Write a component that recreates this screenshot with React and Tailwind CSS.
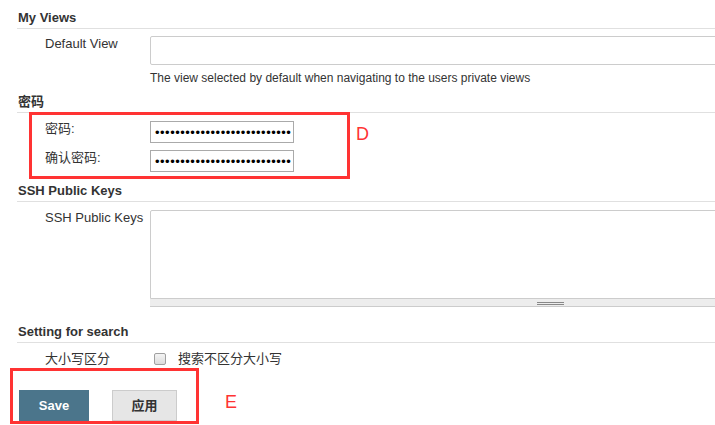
import React from "react";

function SectionHeader({ children, className = "" }) {
    return (
        <div className={`border-b border-[#e0e0e0] pl-px text-[13px] font-bold leading-5 text-[#333] ${className}`}>
            {children}
        </div>
    );
}

function Row({ label, children, className = "" }) {
    return (
        <div className={`flex ${className}`}>
            <div className="w-[133px] shrink-0 pl-[28px] leading-[15px]">{label}</div>
            <div className="flex-1">{children}</div>
        </div>
    );
}

function PasswordBox() {
    return (
        <div className="flex h-[22px] w-[144px] items-center border border-[#aaa] pl-[4px] text-[13px] leading-none tracking-[0.5px] text-black">
            •••••••••••••••••••••••••••
        </div>
    );
}

export default function App() {
    return (
        <div
            className="relative h-[425px] w-[715px] overflow-hidden bg-white text-[13px] text-[#333]"
            style={{ fontFamily: '"Liberation Sans", Arial, "Noto Sans CJK SC", sans-serif' }}
        >
            <div className="w-[760px] pl-[17px] pt-[8px]">
                {/* --- My Views --- */}
                <SectionHeader>My Views</SectionHeader>
                <Row label="Default View" className="mt-[7px]">
                    <div className="h-[29px] w-[620px] rounded-[2px] border border-[#ccc] bg-white" />
                    <div className="mt-[5px] text-[12px] leading-4">
                        The view selected by default when navigating to the users private views
                    </div>
                </Row>

                {/* --- 密码 --- */}
                <SectionHeader className="mt-[6px]">密码</SectionHeader>
                <Row label="密码:" className="mt-[8px]">
                    <PasswordBox />
                </Row>
                <Row label="确认密码:" className="mt-[7px]">
                    <PasswordBox />
                </Row>

                {/* --- SSH Public Keys --- */}
                <SectionHeader className="mt-[9px]">SSH Public Keys</SectionHeader>
                <Row label="SSH Public Keys" className="mt-[8px]">
                    <div className="h-[89px] w-[620px] rounded-t-[2px] border border-[#ccc] bg-white" />
                    <div className="h-[8px] w-[620px] border-b border-[#ccc] bg-[#ededed] pt-[3px]">
                        <div className="ml-[387px] h-[3px] w-[27px] border-y border-[#888]" />
                    </div>
                </Row>

                {/* --- Setting for search --- */}
                <SectionHeader className="mt-[15px]">Setting for search</SectionHeader>
                <Row label="大小写区分" className="mt-[8px]">
                    <div className="flex items-center leading-[15px]">
                        <span className="ml-[4px] h-[12px] w-[12px] rounded-[2px] border border-[#a0a0a0] bg-gradient-to-b from-[#f4f4f4] to-[#dcdcdc]" />
                        <span className="ml-[12px]">搜索不区分大小写</span>
                    </div>
                </Row>

                {/* --- Buttons --- */}
                <div className="ml-[2px] mt-[24px] flex gap-[23px]">
                    <button className="h-[31px] w-[70px] bg-[#4b758b] text-[13px] font-bold text-white">
                        Save
                    </button>
                    <button className="h-[31px] w-[65px] border border-[#ccc] bg-[#e6e6e6] text-[13px] font-bold text-[#333]">
                        应用
                    </button>
                </div>
            </div>

            {/* --- annotations --- */}
            <div className="absolute left-[29px] top-[112px] h-[67px] w-[321px] border-[3px] border-[#f33]" />
            <div className="absolute left-[356px] top-[124px] text-[18px] leading-5 text-[#f33]">D</div>
            <div className="absolute left-[10px] top-[368px] h-[56px] w-[189px] border-[3px] border-[#f33]" />
            <div className="absolute left-[225px] top-[392px] text-[18px] leading-5 text-[#f33]">E</div>
        </div>
    );
}
